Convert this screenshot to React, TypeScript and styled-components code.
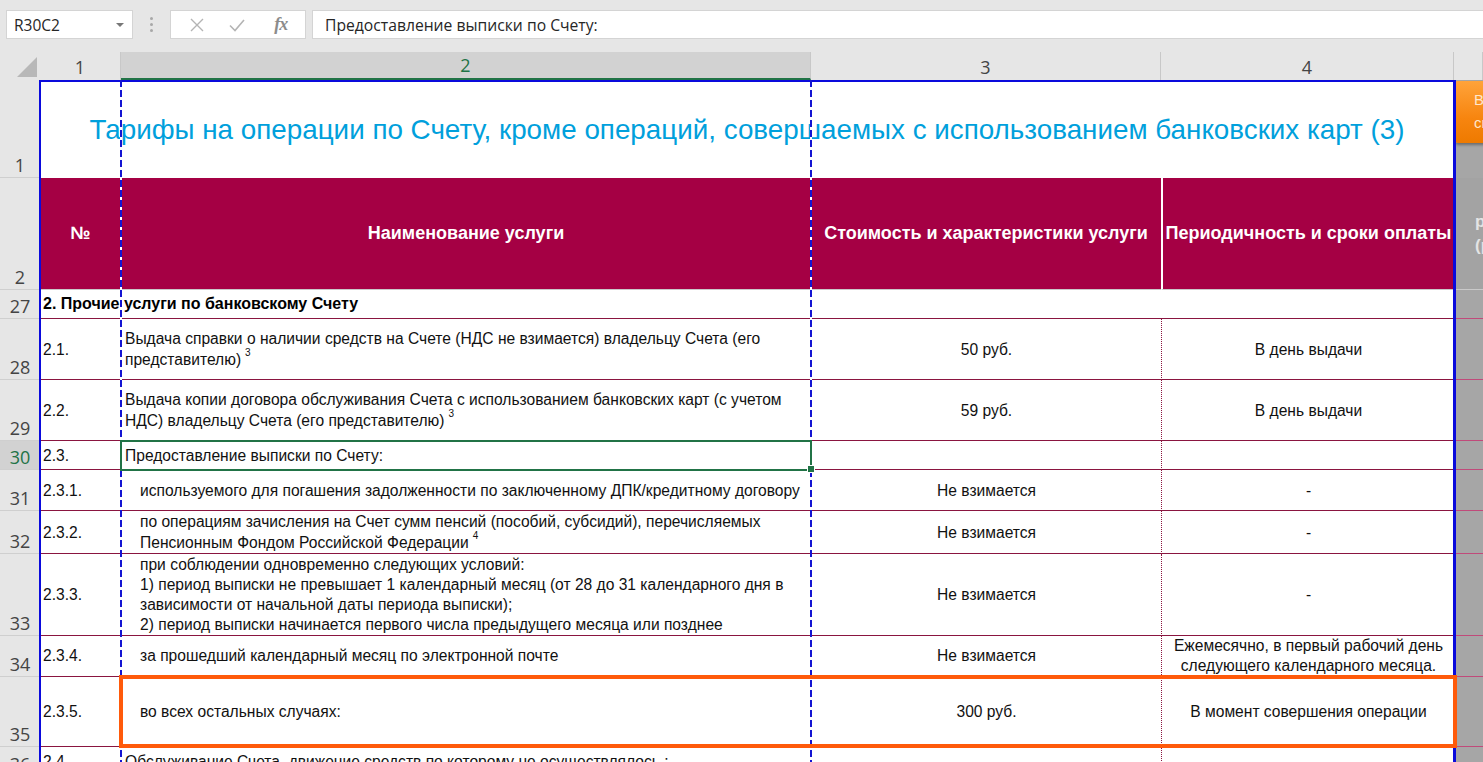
import React from 'react';
import styled, { createGlobalStyle } from 'styled-components';

const GlobalStyle = createGlobalStyle`
  html, body {
    margin: 0;
    padding: 0;
    background: #ffffff;
    overflow: hidden;
  }
  body {
    width: 1483px;
    height: 762px;
    font-family: "Liberation Sans", Arial, sans-serif;
  }
`;

const COLS = '40px 81px 690px 350px 293px 1fr';
const LINE = '#8a1540';
const UI_FONT = '"Open Sans", "Noto Sans", sans-serif';

const Window = styled.div`
  width: 1483px;
  height: 762px;
  overflow: hidden;
  display: flex;
  flex-direction: column;
  background: #e6e6e6;
`;

const FormulaBar = styled.div`
  height: 52px;
  flex: none;
  display: flex;
  align-items: flex-start;
  padding: 10px 0 0 6px;
  box-sizing: border-box;
`;

const NameBox = styled.div`
  width: 127px;
  height: 29px;
  box-sizing: border-box;
  background: #fff;
  border: 1px solid #d4d4d4;
  display: flex;
  align-items: center;
  justify-content: space-between;
  padding: 0 8px 0 7px;
  font-family: ${UI_FONT};
  font-size: 15.5px;
  color: #262626;
`;

const Caret = styled.span`
  width: 0;
  height: 0;
  border-left: 4px solid transparent;
  border-right: 4px solid transparent;
  border-top: 4px solid #777;
`;

const Grip = styled.div`
  width: 37px;
  height: 29px;
  display: flex;
  flex-direction: column;
  align-items: center;
  justify-content: center;
  gap: 3px;
  span {
    width: 3px;
    height: 3px;
    border-radius: 50%;
    background: #a8a8a8;
  }
`;

const FxBox = styled.div`
  width: 136px;
  height: 29px;
  box-sizing: border-box;
  background: #fff;
  border: 1px solid #d4d4d4;
  display: flex;
  align-items: center;
  justify-content: space-around;
  padding: 0 6px;
  color: #a6a6a6;
`;

const FxText = styled.span`
  font-family: "Liberation Serif", serif;
  font-style: italic;
  font-weight: bold;
  font-size: 18px;
  color: #8c8c8c;
  letter-spacing: -1px;
  margin-left: 4px;
`;

const FormulaInput = styled.div`
  margin-left: 6px;
  flex: 1;
  height: 29px;
  box-sizing: border-box;
  background: #fff;
  border: 1px solid #d4d4d4;
  border-right: none;
  display: flex;
  align-items: center;
  padding-left: 12px;
  font-family: ${UI_FONT};
  font-size: 15.7px;
  color: #262626;
`;

const Sheet = styled.div`
  flex: 1;
  display: flex;
  flex-direction: column;
  position: relative;
  overflow: hidden;
`;

const HeaderRow = styled.div`
  height: 28px;
  flex: none;
  display: grid;
  grid-template-columns: ${COLS};
`;

const Corner = styled.div`
  position: relative;
  background: #e6e6e6;
  &::after {
    content: '';
    position: absolute;
    right: 3px;
    bottom: 3px;
    width: 0;
    height: 0;
    border-left: 20px solid transparent;
    border-bottom: 20px solid #b8b8b8;
  }
`;

const ColHead = styled.div<{ $sel?: boolean }>`
  box-sizing: border-box;
  display: flex;
  align-items: flex-end;
  justify-content: center;
  padding-bottom: 1px;
  font-family: ${UI_FONT};
  font-size: 18px;
  color: ${({ $sel }) => ($sel ? '#217346' : '#444')};
  background: ${({ $sel }) => ($sel ? '#d2d2d2' : '#e6e6e6')};
  border-right: 1px solid #c8c8c8;
  border-bottom: ${({ $sel }) => ($sel ? '2px solid #217346' : 'none')};
`;

const Body = styled.div`
  position: relative;
  display: flex;
  flex-direction: column;
  background: #fff;
`;

const Row = styled.div<{ $h: number }>`
  height: ${({ $h }) => $h}px;
  flex: none;
  display: grid;
  grid-template-columns: ${COLS};
`;

const RowHead = styled.div<{ $sel?: boolean }>`
  box-sizing: border-box;
  display: flex;
  align-items: flex-end;
  justify-content: center;
  font-family: ${UI_FONT};
  font-size: 18px;
  line-height: 23px;
  color: ${({ $sel }) => ($sel ? '#217346' : '#444')};
  background: ${({ $sel }) => ($sel ? '#d2d2d2' : '#e6e6e6')};
  border-bottom: 1px solid #cfcfcf;
`;

const Cell = styled.div<{
  $align?: 'left' | 'center';
  $indent?: boolean;
  $dotted?: boolean;
  $lh?: number;
  $sel?: boolean;
}>`
  position: relative;
  box-sizing: border-box;
  display: flex;
  align-items: center;
  justify-content: ${({ $align }) => ($align === 'center' ? 'center' : 'flex-start')};
  text-align: ${({ $align }) => $align || 'left'};
  padding: 0 3px 0 ${({ $indent }) => ($indent ? '19px' : '4px')};
  font-size: 15.6px;
  line-height: ${({ $lh }) => $lh || 21}px;
  color: #111;
  border-bottom: 1px solid ${LINE};
  border-left: ${({ $dotted }) => ($dotted ? `1px dotted ${LINE}` : 'none')};
  ${({ $sel }) =>
    $sel &&
    `
    outline: 2px solid #217346;
    outline-offset: -1px;
    z-index: 3;
  `}
`;

const NumCell = styled(Cell)`
  padding-left: 3px;
`;

const FillHandle = styled.span`
  position: absolute;
  right: -4px;
  bottom: -4px;
  width: 6px;
  height: 6px;
  background: #217346;
  border: 1px solid #fff;
`;

const Sup = styled.sup`
  font-size: 10px;
  vertical-align: 9px;
  line-height: 0;
  margin-left: 4px;
`;

const Title = styled.div`
  grid-column: 2 / span 4;
  display: flex;
  align-items: center;
  justify-content: center;
  padding-top: 2px;
  font-size: 27.8px;
  color: #00a0dc;
  background: #fff;
  white-space: nowrap;
`;

const Section = styled.div`
  grid-column: 2 / span 4;
  display: flex;
  align-items: center;
  padding-left: 3px;
  box-sizing: border-box;
  font-size: 16px;
  font-weight: bold;
  color: #000;
  border-bottom: 1px solid ${LINE};
`;

const HeadCell = styled.div<{ $divider?: boolean }>`
  box-sizing: border-box;
  background: #a50044;
  display: flex;
  align-items: center;
  justify-content: center;
  text-align: center;
  white-space: nowrap;
  color: #fff;
  font-weight: bold;
  font-size: 18px;
  border-left: ${({ $divider }) => ($divider ? '2px solid #fff' : 'none')};
  border-bottom: 1px solid #c9c9c9;
`;

const Side = styled.div<{ $top?: boolean }>`
  box-sizing: border-box;
  background: #a6a6a6;
  border-bottom: ${({ $top }) => ($top ? 'none' : '1px solid #c04a7a')};
  overflow: hidden;
`;

const SideHead = styled(Side)`
  display: flex;
  flex-direction: column;
  justify-content: center;
  padding-left: 21px;
  background: #a3a3a3;
  color: #e4e4e4;
  font-weight: bold;
  font-size: 17px;
  line-height: 24px;
  white-space: nowrap;
  border-bottom: 1px solid #c9c9c9;
`;

const OrangeButton = styled.div`
  width: 60px;
  height: 62px;
  margin-top: 1px;
  margin-left: 1px;
  border-radius: 3px 0 0 3px;
  background: linear-gradient(#ffa33a, #f7850f 60%, #ee7a00);
  box-shadow: 0 2px 3px rgba(0, 0, 0, 0.35);
  color: #ffe6cc;
  font-size: 15px;
  line-height: 23px;
  padding: 7px 0 0 19px;
  box-sizing: border-box;
  white-space: nowrap;
`;

const PageLine = styled.div<{ $x: number; $w: number; $dashed?: boolean }>`
  position: absolute;
  top: 0;
  bottom: 0;
  left: ${({ $x }) => $x}px;
  width: ${({ $w }) => $w}px;
  z-index: 2;
  background: ${({ $dashed }) =>
    $dashed ? 'repeating-linear-gradient(to bottom, #1414d2 0 7px, #fff 7px 10px)' : '#0a0adc'};
`;

const TopLine = styled.div`
  position: absolute;
  top: 0;
  left: 40px;
  width: 1416px;
  height: 2px;
  background: #0a0adc;
  z-index: 2;
`;

const Highlight = styled.div`
  position: absolute;
  left: 119px;
  top: 595px;
  width: 1338px;
  height: 73px;
  box-sizing: border-box;
  border: 4px solid #ff5a0a;
  z-index: 4;
`;

type DataRow = {
  n: number;
  h: number;
  num: string;
  name: React.ReactNode;
  indent?: boolean;
  price: string;
  period: React.ReactNode;
  lh?: number;
  sel?: boolean;
};

const rows: DataRow[] = [
  {
    n: 28,
    h: 61,
    num: '2.1.',
    name: (
      <span>
        Выдача справки о наличии средств на Счете (НДС не взимается) владельцу Счета (его представителю)
        <Sup>3</Sup>
      </span>
    ),
    price: '50 руб.',
    period: 'В день выдачи',
  },
  {
    n: 29,
    h: 61,
    num: '2.2.',
    name: (
      <span>
        Выдача копии договора обслуживания Счета с использованием банковских карт (с учетом НДС) владельцу
        Счета (его представителю)
        <Sup>3</Sup>
      </span>
    ),
    price: '59 руб.',
    period: 'В день выдачи',
  },
  { n: 30, h: 29, num: '2.3.', name: 'Предоставление выписки по Счету:', price: '', period: '', sel: true },
  {
    n: 31,
    h: 41,
    num: '2.3.1.',
    indent: true,
    name: 'используемого для погашения задолженности по заключенному ДПК/кредитному договору',
    price: 'Не взимается',
    period: '-',
  },
  {
    n: 32,
    h: 43,
    num: '2.3.2.',
    indent: true,
    name: (
      <span>
        по операциям зачисления на Счет сумм пенсий (пособий, субсидий), перечисляемых
        <br />
        Пенсионным Фондом Российской Федерации
        <Sup>4</Sup>
      </span>
    ),
    price: 'Не взимается',
    period: '-',
  },
  {
    n: 33,
    h: 82,
    num: '2.3.3.',
    indent: true,
    lh: 20,
    name: (
      <span>
        при соблюдении одновременно следующих условий:
        <br />
        1) период выписки не превышает 1 календарный месяц (от 28 до 31 календарного дня в
        <br />
        зависимости от начальной даты периода выписки);
        <br />
        2) период выписки начинается первого числа предыдущего месяца или позднее
      </span>
    ),
    price: 'Не взимается',
    period: '-',
  },
  {
    n: 34,
    h: 41,
    num: '2.3.4.',
    indent: true,
    lh: 20,
    name: 'за прошедший календарный месяц по электронной почте',
    price: 'Не взимается',
    period: (
      <span>
        Ежемесячно, в первый рабочий день
        <br />
        следующего календарного месяца.
      </span>
    ),
  },
  {
    n: 35,
    h: 70,
    num: '2.3.5.',
    indent: true,
    name: 'во всех остальных случаях:',
    price: '300 руб.',
    period: 'В момент совершения операции',
  },
  {
    n: 36,
    h: 30,
    num: '2.4.',
    name: 'Обслуживание Счета, движение средств по которому не осуществлялось :',
    price: '',
    period: '',
  },
];

const XIcon = () => (
  <svg width="16" height="16" viewBox="0 0 16 16">
    <path d="M2 2 L14 14 M14 2 L2 14" stroke="#b4b4b4" strokeWidth="1.4" fill="none" />
  </svg>
);

const CheckIcon = () => (
  <svg width="18" height="16" viewBox="0 0 18 16">
    <path d="M2 8.5 L7 13.5 L16 3" stroke="#b4b4b4" strokeWidth="1.6" fill="none" />
  </svg>
);

export default function App() {
  return (
    <Window>
      <GlobalStyle />
      <FormulaBar>
        <NameBox>
          R30C2
          <Caret />
        </NameBox>
        <Grip>
          <span />
          <span />
          <span />
        </Grip>
        <FxBox>
          <XIcon />
          <CheckIcon />
          <FxText>fx</FxText>
        </FxBox>
        <FormulaInput>Предоставление выписки по Счету:</FormulaInput>
      </FormulaBar>
      <Sheet>
        <HeaderRow>
          <Corner />
          <ColHead>1</ColHead>
          <ColHead $sel>2</ColHead>
          <ColHead>3</ColHead>
          <ColHead>4</ColHead>
          <ColHead />
        </HeaderRow>
        <Body>
          <Row $h={98}>
            <RowHead>1</RowHead>
            <Title>Тарифы на операции по Счету, кроме операций, совершаемых с использованием банковских карт (3)</Title>
            <Side $top>
              <OrangeButton>
                Вы
                <br />
                сп
              </OrangeButton>
            </Side>
          </Row>
          <Row $h={112}>
            <RowHead>2</RowHead>
            <HeadCell>№</HeadCell>
            <HeadCell>Наименование услуги</HeadCell>
            <HeadCell>Стоимость и характеристики услуги</HeadCell>
            <HeadCell $divider>Периодичность и сроки оплаты</HeadCell>
            <SideHead>
              <span>размер</span>
              <span>(руб.)</span>
            </SideHead>
          </Row>
          <Row $h={29}>
            <RowHead>27</RowHead>
            <Section>2. Прочие услуги по банковскому Счету</Section>
            <Side />
          </Row>
          {rows.map((r) => (
            <Row key={r.n} $h={r.h}>
              <RowHead $sel={r.sel}>{r.n}</RowHead>
              <NumCell $lh={r.lh}>{r.num}</NumCell>
              <Cell $indent={r.indent} $lh={r.lh} $sel={r.sel}>
                <div>{r.name}</div>
                {r.sel && <FillHandle />}
              </Cell>
              <Cell $align="center" $lh={r.lh}>
                {r.price}
              </Cell>
              <Cell $align="center" $dotted $lh={r.lh}>
                {r.period}
              </Cell>
              <Side />
            </Row>
          ))}
          <TopLine />
          <PageLine $x={39} $w={2} />
          <PageLine $x={120} $w={2} $dashed />
          <PageLine $x={810} $w={2} $dashed />
          <PageLine $x={1453} $w={3} />
          <Highlight />
        </Body>
      </Sheet>
    </Window>
  );
}
